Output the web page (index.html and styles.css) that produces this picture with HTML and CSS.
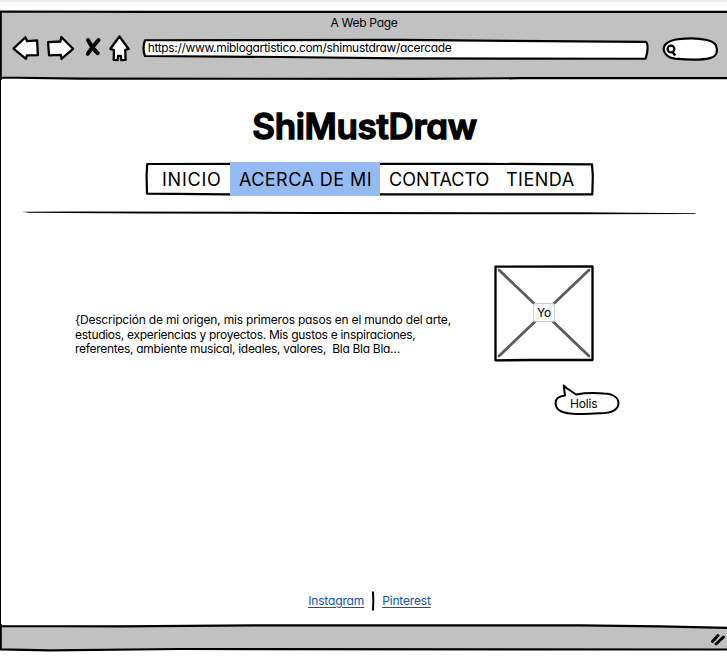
FILE: index.html
```html
<!DOCTYPE html>
<html lang="es">
<head>
<meta charset="utf-8">
<title>A Web Page</title>
<link rel="stylesheet" href="styles.css">
</head>
<body>
<div class="window">
  <header class="chrome">
    <svg class="sketch" viewBox="0 0 727 70" aria-hidden="true">
      <path class="metal" d="M1 1.8L727 1.8V68.5L420 69L200 69L80 68.5L1 67.5Z"/>
      <path class="line" d="M0 1.5L150 1.8L727 1.8M0 67.5L80 68.6L420 68.9L520 68.2L727 68.2M.7 1V70"/>
    </svg>
    <div class="window-title"><span>A Web Page</span></div>
    <div class="toolbar">
      <svg class="icons" viewBox="0 0 130 32" aria-hidden="true">
        <g class="arrow">
          <path d="M13.5 16.7L25.5 5.2L27.2 9.2L37.2 8.3L38 23.2L27 23.3L26 26.8Z"/>
          <path d="M48.2 10.2L60.5 9.5L61.5 5L73.3 16.8L61.7 27L61 22.8L49.2 23.3Z"/>
          <path d="M119.8 4.5L129 17L125.6 17.8L126 28L121.5 28.2L121.2 24L118.4 24L118 28.2L114 28L114.3 18L110.7 16.8Z"/>
        </g>
        <path class="cross" d="M88.3 8Q92 16 98 21.3M98.8 8Q93 14 88 21.8"/>
      </svg>
      <div class="address">
        <svg class="sketch" viewBox="0 0 508 22" aria-hidden="true"><path class="box" d="M3 2.2L260 1.8L370 2.8L505 3.8Q508 5 506.5 15L505 20.8L260 20.4L140 19L3 18Q0 11 3 2.2Z"/></svg>
        <span>https://www.miblogartistico.com/shimustdraw/acercade</span>
      </div>
      <svg class="search" viewBox="0 0 58 26" aria-hidden="true">
        <path class="box" d="M3 15C1 8 9 4.3 17 3.2Q34 1 46 4Q56 6 56 13Q57 20 49 22.2Q38 25 14 22.7Q5 21.5 3 15Z"/>
        <circle cx="10" cy="13" r="3.4"/><path class="handle" d="M11.5 16L14.3 19.6"/>
      </svg>
    </div>
  </header>

  <main class="page">
    <h1><span>ShiMustDraw</span></h1>
    <nav>
      <svg class="sketch" viewBox="0 0 449 34" aria-hidden="true"><path class="line" d="M2.2 2L330 1.8L447 2.4L447.8 14L447.3 32.4L84 32.3L2 31.6L1.6 14Z"/></svg>
      <a class="inicio">INICIO</a><a class="active">ACERCA DE MI</a><a class="contacto">CONTACTO</a><a class="tienda">TIENDA</a>
    </nav>
    <svg class="rule" viewBox="0 0 676 6" aria-hidden="true"><path d="M1 1.8L60 1.4L290 2L560 2.3L675 3.2L674 4L560 4.2L300 4L120 3.6L8 2.7Z"/></svg>
    <section class="about">
      <p><span class="l1">{Descripción de mi origen, mis primeros pasos en el mundo del arte,</span><br><span class="l2">estudios, experiencias y proyectos. Mis gustos e inspiraciones,</span><br><span class="l3">referentes, ambiente musical, ideales, valores,&nbsp; Bla Bla Bla…</span></p>
      <div class="side">
        <div class="photo">
          <svg class="sketch" viewBox="0 0 100 97" aria-hidden="true">
            <path class="diagonal" d="M5 5L95 91M95 5L5 91"/>
            <path class="line" d="M1.5 1.6L98.5 1.4L98.5 95L35 95L1.5 95.4Z"/>
          </svg>
          <span>Yo</span>
        </div>
        <div class="bubble">
          <svg class="sketch" viewBox="0 0 66 32" aria-hidden="true"><path d="M11 10.5L9.7 .5L12.5 3L22 9.5Q34 7.4 50 8.5C61 9 64.5 14 64.5 18.5C64 25 57 28.4 45 28.2Q28 29.5 16 28.4C6 27.5 1.5 23.5 1.6 18C1.5 13 6 11 11 10.5Z"/></svg>
          <span>Holis</span>
        </div>
      </div>
    </section>
    <div class="links">
      <a class="insta">Instagram</a>
      <svg viewBox="0 0 4 20" aria-hidden="true"><path d="M2 .5L2.3 10L2 19.5"/></svg>
      <a class="pin">Pinterest</a>
    </div>
  </main>

  <footer class="status">
    <svg class="sketch" viewBox="0 0 727 28" aria-hidden="true">
      <path class="metal" d="M1 1.5L590 1.5L727 4V25.5L1 25.5Z"/>
      <path class="line" d="M0 2L120 2.3L260 1.4L580 1.3L660 2.3L727 3.9M0 25.3L50 26.3L180 25L727 25.5M.7 0V26"/>
      <path class="grip" d="M712.5 17.5L718 11.5M716 20L723.5 13"/>
    </svg>
  </footer>
</div>
</body>
</html>
```
FILE: styles.css
```css
* { box-sizing: border-box; }
body {
  margin: 0;
  background: #fff;
  color: #000;
  font: 12px/14.5px Inter, "Liberation Sans", sans-serif;
  font-feature-settings: "cv11" 1;
  overflow: hidden;
}
span, a { white-space: nowrap; }
.window {
  height: 659px;
  display: flex;
  flex-direction: column;
  padding: 8px 0 7px;
  border-top: 2px solid #ebebeb;
}
.sketch {
  position: absolute;
  inset: 0;
  width: 100%;
  height: 100%;
  overflow: visible;
  z-index: -1;
}
.metal { fill: #c1c1c1; }
.line { fill: none; stroke: #000; stroke-width: 2.2; stroke-linejoin: round; }
.box { fill: #fff; stroke: #000; stroke-width: 2.2; stroke-linejoin: round; }
.chrome { position: relative; height: 70px; padding: 5px 8px 0 0; z-index: 0; }
.window-title { text-align: center; padding-left: 9px; height: 17px; line-height: 16px; letter-spacing: -.3px; }
.toolbar { display: flex; align-items: flex-start; }
.icons { width: 130px; height: 32px; margin-right: 12px; }
.arrow { fill: #fff; stroke: #000; stroke-width: 2.3; stroke-linejoin: round; }
.cross { fill: none; stroke: #000; stroke-width: 4; stroke-linecap: round; }
.address { position: relative; width: 508px; height: 22px; margin-top: 6px; padding: 3px 6px; letter-spacing: -.32px; }
.search { width: 58px; height: 26px; margin: 4px 0 0 13px; }
.search circle { fill: none; stroke: #000; stroke-width: 2.2; }
.handle { stroke: #000; stroke-width: 2.5; }
.page {
  flex: 1;
  display: flex;
  flex-direction: column;
  border-left: 1px solid #000;
}
h1 {
  margin: 25px 0 0;
  height: 57px;
  padding-left: 1px;
  text-align: center;
  font-size: 35px;
  line-height: 42px;
  font-weight: 600;
  letter-spacing: -.35px;
  -webkit-text-stroke: 1.3px #000;
  stroke-linejoin: round;
}
nav { position: relative; z-index: 0; display: flex; width: 449px; height: 34px; margin-left: 144px; font-size: 18px; line-height: 35px; }
nav a { height: 34px; }
.inicio { width: 85px; padding-left: 17px; letter-spacing: .75px; }
.active { width: 150px; padding-left: 9px; background: #95bbf3; letter-spacing: .45px; }
.contacto { width: 117px; padding-left: 9px; }
.tienda { padding-left: 9px; letter-spacing: .5px; }
.rule { width: 676px; height: 6px; margin: 14px 0 0 20px; }
.about { display: flex; margin: 49px 0 0 74px; height: 155px; }
.about p { margin: 48px 0 0; width: 419px; }
.l1 { letter-spacing: -.195px; }
.l2 { letter-spacing: -.29px; }
.l3 { letter-spacing: -.29px; }
.side { width: 126px; }
.photo { position: relative; z-index: 0; width: 100px; height: 97px; padding-bottom: 2px; display: flex; align-items: center; justify-content: center; }
.photo .line { stroke-width: 2.3; }
.diagonal { stroke: #5c5c5c; stroke-width: 2.8; stroke-linecap: round; }
.photo span { width: 22px; height: 19px; border: 1px solid #ccc; border-radius: 2px; background: rgba(255,255,255,.9); text-align: center; line-height: 17px; letter-spacing: -.3px; }
.bubble { position: relative; z-index: 0; width: 66px; height: 32px; margin: 23px 0 0 60px; padding: 12px 0 0 16px; letter-spacing: -.2px; }
.bubble path { fill: #fff; stroke: #000; stroke-width: 2; stroke-linejoin: round; }
.links { display: flex; justify-content: center; align-items: center; margin-top: auto; height: 20px; padding-left: 11px; margin-bottom: 13px; color: #11569f; letter-spacing: -.15px; }
.links svg { width: 4px; height: 20px; margin: 0 7px; }
.links path { fill: none; stroke: #000; stroke-width: 2; }
.links a { text-decoration: underline; text-underline-offset: 2px; }
.status { position: relative; z-index: 0; height: 28px; }
.grip { stroke: #000; stroke-width: 3; stroke-linecap: round; }
```
